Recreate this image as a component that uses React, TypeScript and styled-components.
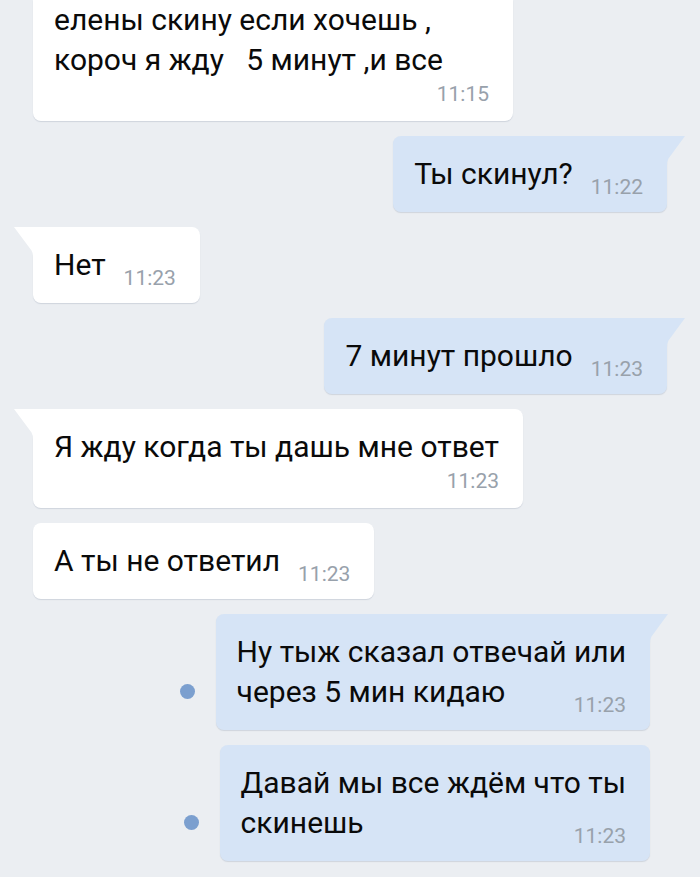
import React from "react";
import styled, { createGlobalStyle, css } from "styled-components";

type Message = {
  lines: string[];
  time: string;
  out?: boolean;
  tail?: boolean;
  cut?: boolean;
  timeBelow?: boolean;
  unread?: boolean;
  width?: number;
  inset?: number;
};

const messages: Message[] = [
  {
    lines: ["елены скину если хочешь ,", "короч я жду   5 минут ,и все"],
    time: "11:15",
    cut: true,
    timeBelow: true,
    width: 480,
  },
  { lines: ["Ты скинул?"], time: "11:22", out: true, tail: true },
  { lines: ["Нет"], time: "11:23", tail: true },
  { lines: ["7 минут прошло"], time: "11:23", out: true, tail: true },
  { lines: ["Я жду когда ты дашь мне ответ"], time: "11:23", tail: true, timeBelow: true },
  { lines: ["А ты не ответил"], time: "11:23" },
  {
    lines: ["Ну тыж сказал отвечай или", "через 5 мин кидаю"],
    time: "11:23",
    out: true,
    tail: true,
    unread: true,
    inset: 50,
  },
  {
    lines: ["Давай мы все ждём что ты", "скинешь"],
    time: "11:23",
    out: true,
    unread: true,
    inset: 50,
  },
];

const GlobalStyle = createGlobalStyle`
  html, body {
    margin: 0;
    padding: 0;
    background: #ebeef2;
  }
  body {
    font-family: Roboto, "Liberation Sans", sans-serif;
    -webkit-font-smoothing: antialiased;
  }
`;

const Screen = styled.div`
  width: 700px;
  height: 877px;
  overflow: hidden;
  background: #ebeef2;
`;

const Feed = styled.div`
  display: flex;
  flex-direction: column;
  gap: 15px;
`;

const Row = styled.div<{ $out?: boolean; $inset: number }>`
  display: flex;
  align-items: flex-end;
  justify-content: ${(p) => (p.$out ? "flex-end" : "flex-start")};
  gap: 21px;
  padding-left: 33px;
  padding-right: ${(p) => p.$inset}px;
`;

const UnreadDot = styled.span`
  width: 15px;
  height: 15px;
  margin-bottom: 31px;
  border-radius: 50%;
  background: #7b9fcf;
`;

const inTail = css`
  left: -19px;
  width: 19px;
  height: 31px;
  clip-path: path("M0 0 H19 V31 Q19 26 17.5 23.5 L0 0 Z");
`;

const outTail = css`
  right: -18px;
  width: 18px;
  height: 30px;
  clip-path: path("M18 0 H0 V30 Q0 25 1.5 22.5 L18 0 Z");
`;

const Bubble = styled.div<{ $out?: boolean; $tail?: boolean; $cut?: boolean; $width?: number }>`
  position: relative;
  box-sizing: border-box;
  width: ${(p) => (p.$width ? `${p.$width}px` : "auto")};
  padding: ${(p) => (p.$cut ? "0" : "18px")} 24px 18px 21px;
  background: ${(p) => (p.$out ? "#d6e4f6" : "#ffffff")};
  border-radius: 8px;
  box-shadow: 0 1px 1px rgba(60, 80, 110, 0.16);

  ${(p) => p.$cut && "border-top-left-radius: 0; border-top-right-radius: 0;"}
  ${(p) =>
    p.$tail &&
    (p.$out ? "border-top-right-radius: 0;" : "border-top-left-radius: 0;")}

  &::before {
    content: "";
    display: ${(p) => (p.$tail ? "block" : "none")};
    position: absolute;
    top: 0;
    background: inherit;
    ${(p) => (p.$out ? outTail : inTail)}
  }
`;

const Text = styled.div`
  font-size: 30px;
  line-height: 40px;
  white-space: pre;
  color: #0a0a0a;
`;

const LastLine = styled.div`
  display: flex;
  align-items: flex-end;
  justify-content: space-between;
  gap: 18px;
`;

const Time = styled.span<{ $below?: boolean }>`
  display: block;
  font-size: 21px;
  line-height: 18px;
  color: #98a1ab;
  white-space: nowrap;

  ${(p) =>
    p.$below
      ? css`
          margin-top: 5px;
          text-align: right;
        `
      : css`
          margin-bottom: -2px;
        `}
`;

const ChatMessage = ({ m }: { m: Message }) => {
  const head = m.lines.slice(0, -1);
  const last = m.lines[m.lines.length - 1];
  return (
    <Row $out={m.out} $inset={m.inset ?? 33}>
      {m.unread && <UnreadDot />}
      <Bubble $out={m.out} $tail={m.tail} $cut={m.cut} $width={m.width}>
        {m.timeBelow ? (
          <>
            <Text>{m.lines.join("\n")}</Text>
            <Time $below>{m.time}</Time>
          </>
        ) : (
          <>
            {head.length > 0 && <Text>{head.join("\n")}</Text>}
            <LastLine>
              <Text>{last}</Text>
              <Time>{m.time}</Time>
            </LastLine>
          </>
        )}
      </Bubble>
    </Row>
  );
};

export default function App() {
  return (
    <Screen>
      <GlobalStyle />
      <Feed>
        {messages.map((m, i) => (
          <ChatMessage key={i} m={m} />
        ))}
      </Feed>
    </Screen>
  );
}
